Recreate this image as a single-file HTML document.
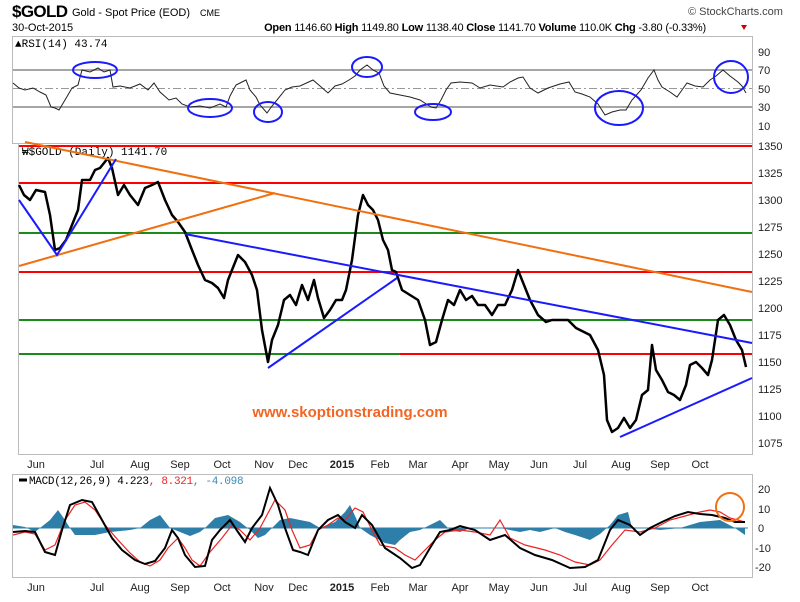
<!DOCTYPE html>
<html><head><style>
body{margin:0;background:#fff;width:800px;height:597px;overflow:hidden;font-family:"Liberation Sans",sans-serif}
</style></head><body>
<svg width="800" height="597" xmlns="http://www.w3.org/2000/svg" font-family="Liberation Sans, sans-serif">
<text x="12" y="17" font-size="17" font-weight="bold" textLength="56">$GOLD</text>
<text x="72" y="16" font-size="11">Gold - Spot Price (EOD)</text>
<text x="200" y="16" font-size="9">CME</text>
<text x="688" y="15" font-size="11" fill="#444">© StockCharts.com</text>
<text x="12" y="31" font-size="11">30-Oct-2015</text>
<text x="485" y="31" font-size="11" text-anchor="middle" letter-spacing="-0.2"><tspan font-weight="bold">Open</tspan> 1146.60 <tspan font-weight="bold">High</tspan> 1149.80 <tspan font-weight="bold">Low</tspan> 1138.40 <tspan font-weight="bold">Close</tspan> 1141.70 <tspan font-weight="bold">Volume</tspan> 110.0K <tspan font-weight="bold">Chg</tspan> -3.80 (-0.33%)</text>
<path d="M741 25l6 0-3 5z" fill="#c00"/>
<!-- RSI panel -->
<rect x="12.5" y="36.5" width="740" height="107" fill="none" stroke="#bbb"/>
<text x="15" y="47" font-size="11" font-family="Liberation Mono, monospace">▲RSI(14) 43.74</text>
<line x1="13" y1="70" x2="752" y2="70" stroke="#888" stroke-width="1.5"/>
<line x1="13" y1="107" x2="752" y2="107" stroke="#888" stroke-width="1.5"/>
<line x1="13" y1="88.5" x2="752" y2="88.5" stroke="#999" stroke-dasharray="8,3,2,3"/>
<polyline fill="none" stroke="#222" stroke-width="1" points="13,83 19,88 25,90 33,88 40,92 46,95 51,107 55,108 59,110 65,100 72,88 78,85 82,70 90,72 98,68 104,72 110,70 113,87 120,86 130,88 140,84 148,90 154,83 160,92 169,100 176,98 182,104 190,107 200,106 210,108 220,104 226,107 230,96 236,85 246,80 250,90 256,97 260,105 267,113 272,106 277,100 285,90 292,87 300,86 313,80 320,86 328,93 335,86 342,84 349,80 355,76 360,70 367,65 373,70 379,73 384,86 390,93 400,95 410,97 420,100 431,107 436,108 441,100 446,90 451,83 460,82 472,83 480,88 490,85 503,87 510,82 518,78 523,77 530,88 538,93 548,88 560,84 569,82 575,92 582,94 590,97 598,104 605,115 612,112 620,110 626,110 632,100 641,90 648,78 654,70 658,80 662,87 670,92 677,97 682,90 687,83 695,86 703,87 710,80 716,76 723,70 730,76 738,82 742,86 746,93"/>
<g fill="none" stroke="#1a1aff" stroke-width="2">
<ellipse cx="95" cy="70" rx="22" ry="8"/><ellipse cx="210" cy="108" rx="22" ry="9"/><ellipse cx="268" cy="112" rx="14" ry="10"/><ellipse cx="367" cy="67" rx="15" ry="10"/><ellipse cx="433" cy="112" rx="18" ry="8"/><ellipse cx="619" cy="108" rx="24" ry="17"/><ellipse cx="731" cy="77" rx="17" ry="16"/>
</g>
<g font-size="11" fill="#222"><text x="758" y="56">90</text><text x="758" y="74">70</text><text x="758" y="93">50</text><text x="758" y="111">30</text><text x="758" y="130">10</text></g>
<!-- Price panel -->
<rect x="18.5" y="143.5" width="734" height="311" fill="none" stroke="#bbb"/>
<g stroke-width="2">
<line x1="19" y1="146" x2="752" y2="146" stroke="#f00"/>
<line x1="19" y1="183" x2="752" y2="183" stroke="#f00"/>
<line x1="19" y1="233" x2="752" y2="233" stroke="#1a8a1a"/>
<line x1="19" y1="272" x2="752" y2="272" stroke="#f00"/>
<line x1="19" y1="320" x2="752" y2="320" stroke="#1a8a1a"/>
<line x1="19" y1="354" x2="752" y2="354" stroke="#1a8a1a"/>
<line x1="400" y1="354" x2="752" y2="354" stroke="#f00"/>
</g>
<text x="22" y="155" font-size="11" font-family="Liberation Mono, monospace">₩$GOLD (Daily) 1141.70</text>
<polyline fill="none" stroke="#000" stroke-width="2.5" stroke-linejoin="round" points="19,185 24,195 30,200 36,190 45,192 50,215 55,250 60,248 66,240 72,225 78,210 82,180 90,180 95,170 100,168 108,158 112,168 118,195 124,185 130,195 138,205 145,188 152,185 158,182 165,200 172,215 178,222 185,232 192,250 198,265 205,280 212,283 218,288 224,298 228,280 238,255 245,262 252,275 257,290 262,330 268,362 272,340 278,325 284,300 290,295 296,305 302,285 308,300 314,280 318,298 324,318 330,310 336,300 342,300 346,290 352,260 358,215 363,195 368,205 373,210 378,220 383,240 388,250 392,270 396,272 402,290 410,295 418,300 425,320 430,345 436,342 442,320 448,300 454,305 460,290 466,300 472,296 478,305 485,305 492,315 498,305 505,305 512,290 518,270 524,285 530,300 538,315 546,322 552,320 560,320 568,320 576,328 584,332 590,335 598,350 604,375 607,420 612,432 618,428 624,418 630,428 636,420 642,395 648,390 652,345 656,370 662,380 668,392 674,395 680,400 686,385 690,365 696,362 702,368 708,375 712,360 718,320 724,315 730,325 736,340 742,350 746,367"/>
<g stroke="#f07010" stroke-width="2" fill="none">
<line x1="19" y1="266" x2="275" y2="193"/>
<line x1="25" y1="142" x2="752" y2="292"/>
</g>
<g stroke="#1a1aff" stroke-width="2" fill="none">
<polyline points="19,200 57,255 116,159"/>
<line x1="185" y1="234" x2="752" y2="343"/>
<line x1="268" y1="368" x2="397" y2="278"/>
<line x1="620" y1="437" x2="752" y2="378"/>
</g>
<text x="350" y="417" font-size="15" font-weight="bold" fill="#f26522" text-anchor="middle">www.skoptionstrading.com</text>
<g font-size="11" fill="#222"><text x="758" y="150">1350</text><text x="758" y="177">1325</text><text x="758" y="204">1300</text><text x="758" y="231">1275</text><text x="758" y="258">1250</text><text x="758" y="285">1225</text><text x="758" y="312">1200</text><text x="758" y="339">1175</text><text x="758" y="366">1150</text><text x="758" y="393">1125</text><text x="758" y="420">1100</text><text x="758" y="447">1075</text></g>
<g font-size="11" fill="#222" text-anchor="middle"><text x="36" y="468">Jun</text><text x="97" y="468">Jul</text><text x="140" y="468">Aug</text><text x="180" y="468">Sep</text><text x="222" y="468">Oct</text><text x="264" y="468">Nov</text><text x="298" y="468">Dec</text><text x="342" y="468" font-weight="bold">2015</text><text x="380" y="468">Feb</text><text x="418" y="468">Mar</text><text x="460" y="468">Apr</text><text x="499" y="468">May</text><text x="539" y="468">Jun</text><text x="580" y="468">Jul</text><text x="621" y="468">Aug</text><text x="660" y="468">Sep</text><text x="700" y="468">Oct</text></g>
<!-- MACD -->
<rect x="12.5" y="474.5" width="740" height="103" fill="none" stroke="#bbb"/>
<line x1="19" y1="480" x2="27" y2="480" stroke="#000" stroke-width="3"/>
<text x="29" y="484" font-size="11" font-family="Liberation Mono, monospace" letter-spacing="-0.3">MACD(12,26,9) 4.223<tspan fill="#e22">, 8.321</tspan><tspan fill="#3a8ab8">, -4.098</tspan></text>
<path fill="#2d7ea8" d="M13,528 L13,525 L25,527 L35,532 L40,528 L50,520 L58,510 L65,520 L70,528 L75,535 L95,535 L110,532 L130,530 L140,528 L150,520 L160,515 L170,528 L180,532 L190,536 L200,532 L205,528 L215,518 L228,515 L240,522 L250,530 L258,538 L265,535 L270,530 L280,520 L290,518 L310,522 L320,528 L335,522 L345,512 L350,505 L356,518 L360,528 L370,535 L385,543 L395,545 L400,540 L410,532 L420,530 L430,525 L440,520 L450,530 L460,532 L470,528 L500,528 L520,532 L530,530 L540,532 L555,528 L565,532 L575,535 L590,540 L600,534 L610,525 L618,515 L628,512 L632,528 L645,528 L660,530 L680,528 L700,522 L720,520 L735,528 L745,535 L745,528 Z"/>
<line x1="13" y1="528" x2="748" y2="528" stroke="#2d7ea8"/>
<polyline fill="none" stroke="#e22" stroke-width="1.2" points="13,535 25,532 35,534 45,550 55,545 65,520 75,505 85,502 95,510 105,525 118,540 130,553 140,562 150,566 160,560 168,548 178,538 185,548 192,560 200,566 210,552 222,538 232,525 240,530 250,540 260,528 275,500 285,510 292,530 300,548 310,545 318,530 328,525 338,518 345,520 355,508 363,512 372,530 380,545 395,548 405,555 415,560 425,550 435,540 445,532 460,530 475,532 490,535 500,520 510,538 525,545 545,550 560,555 575,562 590,565 600,560 612,545 625,530 640,532 655,528 670,520 685,516 700,512 710,510 720,512 730,518 745,522"/>
<polyline fill="none" stroke="#000" stroke-width="2" points="13,532 25,531 35,532 45,552 55,555 62,530 70,505 82,500 92,502 102,520 112,538 122,550 135,560 145,564 155,561 165,548 172,530 178,538 185,555 195,567 205,566 212,540 220,530 230,520 238,532 245,542 252,528 262,515 270,488 278,505 285,528 293,550 300,552 308,555 318,530 328,520 338,515 345,522 355,528 362,515 372,525 385,548 400,558 412,568 420,565 430,548 440,532 450,530 460,526 475,530 490,540 505,535 520,548 535,555 552,560 570,568 585,567 598,560 610,530 618,520 630,525 640,535 650,528 662,522 675,516 688,512 700,514 712,515 725,518 735,522 745,522"/>
<circle cx="730" cy="507" r="14" fill="none" stroke="#f07010" stroke-width="2"/>
<g font-size="11" fill="#222"><text x="758" y="493">20</text><text x="758" y="513">10</text><text x="758" y="532">0</text><text x="755" y="552">-10</text><text x="755" y="571">-20</text></g>
<g font-size="11" fill="#222" text-anchor="middle"><text x="36" y="591">Jun</text><text x="97" y="591">Jul</text><text x="140" y="591">Aug</text><text x="180" y="591">Sep</text><text x="222" y="591">Oct</text><text x="264" y="591">Nov</text><text x="298" y="591">Dec</text><text x="342" y="591" font-weight="bold">2015</text><text x="380" y="591">Feb</text><text x="418" y="591">Mar</text><text x="460" y="591">Apr</text><text x="499" y="591">May</text><text x="539" y="591">Jun</text><text x="580" y="591">Jul</text><text x="621" y="591">Aug</text><text x="660" y="591">Sep</text><text x="700" y="591">Oct</text></g>
</svg>
</body></html>
